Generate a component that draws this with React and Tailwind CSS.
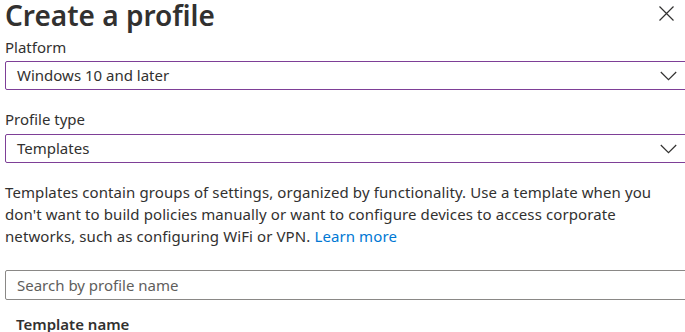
function Chevron() {
  return (
    <svg width="17" height="10" viewBox="0 0 17 10" fill="none" stroke="#323130" strokeWidth="1.2">
      <path d="M0.8 1 L8.5 8.6 L16.2 1" />
    </svg>
  );
}

function CloseIcon() {
  return (
    <svg width="15" height="15" viewBox="0 0 15 15" fill="none" stroke="#323130" strokeWidth="1.2">
      <path d="M0.5 0.5 L14.5 14.5 M14.5 0.5 L0.5 14.5" />
    </svg>
  );
}

function Select({ value }) {
  return (
    <div className="flex h-[29px] w-[684px] items-center justify-between rounded-[2px] border border-[#7e3f97] pl-[11px] pr-[11px]">
      <span>{value}</span>
      <Chevron />
    </div>
  );
}

export default function App() {
  return (
    <div
      className="h-[332px] w-[685px] overflow-hidden bg-white pl-[5px] text-[15px] text-[#323130]"
      style={{ fontFamily: '"Segoe UI", "Noto Sans", sans-serif' }}
    >
      <div className="flex items-start justify-between">
        <h1 className="text-[28px] leading-[30px] font-semibold">Create a profile</h1>
        <div className="mr-[11px] mt-[6px]">
          <CloseIcon />
        </div>
      </div>

      <div className="mt-[7px] leading-[20px]">Platform</div>
      <div className="mt-[4px]">
        <Select value="Windows 10 and later" />
      </div>

      <div className="mt-[19px] leading-[20px]">Profile type</div>
      <div className="mt-[5px]">
        <Select value="Templates" />
      </div>

      <p className="mt-[18px] w-[672px] leading-[22px] tracking-[0.1px]">
        Templates contain groups of settings, organized by functionality. Use a template when you
        don't want to build policies manually or want to configure devices to access corporate
        networks, such as configuring WiFi or VPN. <span className="text-[#0078d4]">Learn more</span>
      </p>

      <div className="mt-[23px] flex h-[30px] w-[684px] items-center rounded-[2px] border border-[#8a8886] pl-[11px] text-[#605e5c]">
        Search by profile name
      </div>

      <div className="mt-[13px] pl-[11px] font-semibold">Template name</div>
    </div>
  );
}
